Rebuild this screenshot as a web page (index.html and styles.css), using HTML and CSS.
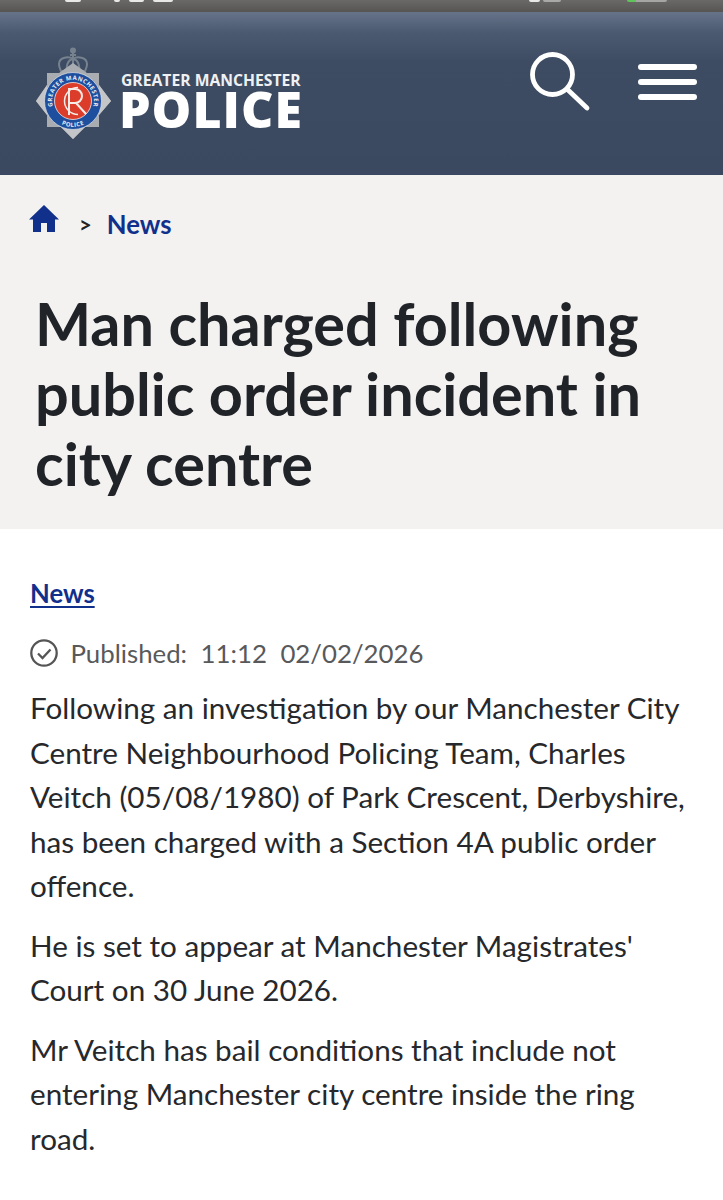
FILE: index.html
```html
<!DOCTYPE html>
<html lang="en">
<head>
<meta charset="utf-8">
<title>Man charged following public order incident in city centre</title>
<link rel="stylesheet" href="styles.css">
</head>
<body>
<div class="status" aria-hidden="true">
  <i class="frag f1"></i><i class="frag f2"></i><i class="frag f3"></i><i class="frag f4"></i>
  <i class="frag f5"></i><i class="frag f6"></i>
  <i class="batt"></i>
</div>
<header class="masthead">
  <a class="brand">
    <svg class="badge" viewBox="0 0 76 93" width="76" height="93" aria-hidden="true">
      <defs>
        <path id="ringTop" d="M22.2 68.8a21 21 0 1 1 29.6 0"/>
        <path id="ringBottom" d="M11 54a26 26 0 0 0 52 0"/>
      </defs>
      <g fill="none" stroke="#77828f" stroke-width="2">
        <circle cx="37" cy="3.5" r="2" fill="#77828f"/>
        <path d="M37 5v6M34 8h6"/>
        <path d="M37 12c-4-3-14-2-14 5 0 4 2 7 4 11M37 12c4-3 14-2 14 5 0 4-2 7-4 11"/>
        <path d="M37 12c-6 1-7 8-6 16M37 12c6 1 7 8 6 16M37 12v16"/>
        <path d="M26 24h22"/>
      </g>
      <path d="M37 16l14 10h12v12l12 16-12 14v12H49L37 92 25 80H11V68L0 54l11-16V26h12z" fill="#a9adb2"/>
      <path d="M37 92L25 80h24zM0 54l11-16v30zM75 54L63 38v30z" fill="#c3c5c8"/>
      <circle cx="37" cy="54" r="28.5" fill="#1e4f9f"/>
      <circle cx="37" cy="54" r="28.5" fill="none" stroke="#dfe3e8" stroke-width=".7"/>
      <text class="ring-text"><textPath href="#ringTop" startOffset="50%" text-anchor="middle">GREATER MANCHESTER</textPath></text>
      <text class="ring-text"><textPath href="#ringBottom" startOffset="50%" text-anchor="middle">POLICE</textPath></text>
      <circle cx="37" cy="54" r="18.5" fill="#dc3d2b" stroke="#f2e9e4" stroke-width=".8"/>
      <path d="M42 40.5a13.5 13.5 0 1 0 0 27" fill="none" stroke="#f6ebe6" stroke-width="1.5"/>
      <path d="M33 68V42h6a7 7 0 0 1 0 14h-6m7 0l10 11" fill="none" stroke="#f6ebe6" stroke-width="2"/>
    </svg>
    <span class="brand-text">
      <span class="brand-top">GREATER MANCHESTER</span>
      <span class="brand-main">POLICE</span>
    </span>
  </a>
  <div class="tools">
    <svg class="search" viewBox="0 0 61 61" width="61" height="61" aria-hidden="true">
      <circle cx="22.5" cy="22.5" r="20" fill="none" stroke="#fff" stroke-width="4.8"/>
      <path d="M37.5 37.5L57 56" stroke="#fff" stroke-width="4.8" stroke-linecap="round"/>
    </svg>
    <div class="burger"><i></i><i></i><i></i></div>
  </div>
</header>
<section class="hero">
  <nav class="crumbs">
    <svg class="home" viewBox="0 0 30 27" width="30" height="27" aria-hidden="true">
      <path d="M15 0L0 14.5h4V27h8v-9h6v9h8V14.5h4z" fill="#11308c"/>
    </svg>
    <span class="sep">&gt;</span>
    <a class="crumb">News</a>
  </nav>
  <h1>Man charged following public order incident in city centre</h1>
</section>
<main class="article">
  <a class="tag">News</a>
  <div class="meta">
    <svg class="tick" viewBox="0 0 28 28" width="28" height="28" aria-hidden="true">
      <circle cx="14" cy="14" r="12.7" fill="none" stroke="#555" stroke-width="2.3"/>
      <path d="M8 14.5l4.5 4.5 8-8.5" fill="none" stroke="#555" stroke-width="2.3"/>
    </svg>
    <span>Published:</span><span>11:12</span><span>02/02/2026</span>
  </div>
  <p>Following an investigation by our Manchester City Centre Neighbourhood Policing Team, Charles Veitch (05/08/1980) of Park Crescent, Derbyshire, has been charged with a Section 4A public order offence.</p>
  <p>He is set to appear at Manchester Magistrates' Court on 30 June 2026.</p>
  <p>Mr Veitch has bail conditions that include not entering Manchester city centre inside the ring road.</p>
</main>
</body>
</html>
```
FILE: styles.css
```css
* { box-sizing: border-box; }
html, body { margin: 0; padding: 0; }
body { width: 723px; height: 1200px; overflow: hidden; background: #fff; font-family: Lato, "Open Sans", sans-serif; color: #26282c; }
.status { height: 12px; background: linear-gradient(#6a6967, #565553); position: relative; }
.frag { position: absolute; top: 0; height: 2px; background: #e8e8e6; border-radius: 0 0 2px 2px; }
.f1 { left: 65px; width: 16px; }
.f2 { left: 114px; width: 6px; }
.f3 { left: 129px; width: 15px; }
.f4 { left: 153px; width: 20px; }
.f5 { left: 529px; width: 11px; }
.f6 { left: 543px; width: 18px; background: #a9a9a7; }
.batt { position: absolute; left: 627px; top: 0; width: 40px; height: 2px; background: linear-gradient(90deg, #5fc45a 0 9px, #a5a5a3 9px); border-radius: 0 0 3px 3px; }
.masthead { height: 163px; background: linear-gradient(#667389 0, #4c5a71 20px, #3d4c62 50px, #3a495f 100%); display: flex; justify-content: space-between; padding: 35px 26px 0 36px; }
.brand { display: flex; align-items: flex-start; gap: 9px; }
.ring-text { font-family: "Open Sans", sans-serif; font-size: 6px; font-weight: 700; fill: #e8ecf2; letter-spacing: .45px; }
.brand-text { display: flex; flex-direction: column; padding-top: 24px; color: #fff; }
.brand-top { font-size: 15.7px; font-weight: 700; line-height: 18px; color: #eef0f3; font-family: "Open Sans", sans-serif; }
.brand-main { font-size: 50px; line-height: 41px; font-weight: 800; letter-spacing: 1px; font-family: "Open Sans", sans-serif; margin-left: -2px; }
.tools { display: flex; align-items: flex-start; gap: 47px; padding-top: 5px; }
.burger { display: flex; flex-direction: column; gap: 9px; width: 59px; padding-top: 12px; }
.burger i { display: block; height: 6px; border-radius: 3px; background: #fff; }
.hero { height: 354px; background: #f3f2f1; padding: 30px 29px 0; }
.crumbs { display: flex; align-items: flex-start; height: 60px; }
.home { display: block; }
.sep { font-size: 22px; font-weight: 700; margin: 7px 0 0 20px; color: #222; line-height: 26px; }
.crumb { font-size: 25.7px; font-weight: 700; color: #11308c; margin: 3px 0 0 15px; line-height: 32px; }
h1 { margin: 23px 0 0 6px; font-size: 59.4px; line-height: 70px; font-weight: 700; color: #202327; }
.article { padding: 45px 30px 0; }
.tag { display: block; font-size: 25.7px; font-weight: 700; line-height: 38px; color: #11308c; text-decoration: underline; text-decoration-thickness: 2px; text-underline-offset: 3px; }
.meta { display: flex; align-items: center; margin-top: 22px; height: 38px; font-size: 25.8px; color: #58595b; gap: 13.5px; }
.tick { margin-right: -1px; }
p { margin: 0 0 15px; font-size: 29.65px; line-height: 44.5px; color: #26282c; }
.meta + p { margin-top: 14px; }
```
